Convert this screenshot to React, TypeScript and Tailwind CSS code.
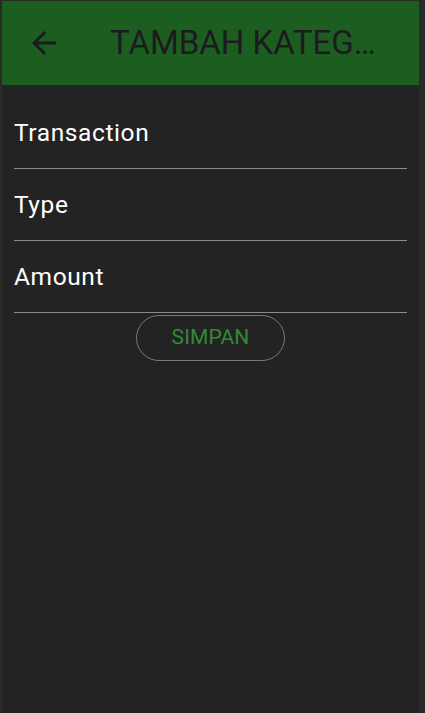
import React from "react";

const fields = ["Transaction", "Type", "Amount"];

const BackArrow = () => (
  <svg width="36" height="36" viewBox="0 0 24 24" className="fill-[#1c1b1f]">
    <path d="M20 11H7.83l5.59-5.59L12 4l-8 8 8 8 1.41-1.41L7.83 13H20v-2z" />
  </svg>
);

const App = () => {
  return (
    <div className="h-[713px] w-[425px] bg-[#2a2a2a] pt-px pl-[2px] pr-[6px] font-['Roboto',sans-serif]">
      <div className="flex h-full flex-col bg-[#232323]">
        <header className="flex h-[84px] items-center bg-[#1b5e20]">
          <div className="flex w-[84px] justify-center">
            <BackArrow />
          </div>
          <h1 className="ml-[24px] truncate text-[33px] font-normal text-[#1c1b1f]">
            TAMBAH KATEG…
          </h1>
        </header>
        <div className="flex flex-col px-[12px] pt-[12px]">
          {fields.map((label) => (
            <div
              key={label}
              className="h-[72px] border-b border-[#8d8891] pt-[18px] text-[24.5px] leading-[36px] tracking-[0.6px] text-white"
            >
              {label}
            </div>
          ))}
          <div className="flex justify-center pt-[2px]">
            <button className="h-[46px] w-[149px] rounded-full border border-[#7c7781] text-[21px] tracking-[0.15px] text-[#2e8b34]">
              SIMPAN
            </button>
          </div>
        </div>
      </div>
    </div>
  );
};

export default App;
